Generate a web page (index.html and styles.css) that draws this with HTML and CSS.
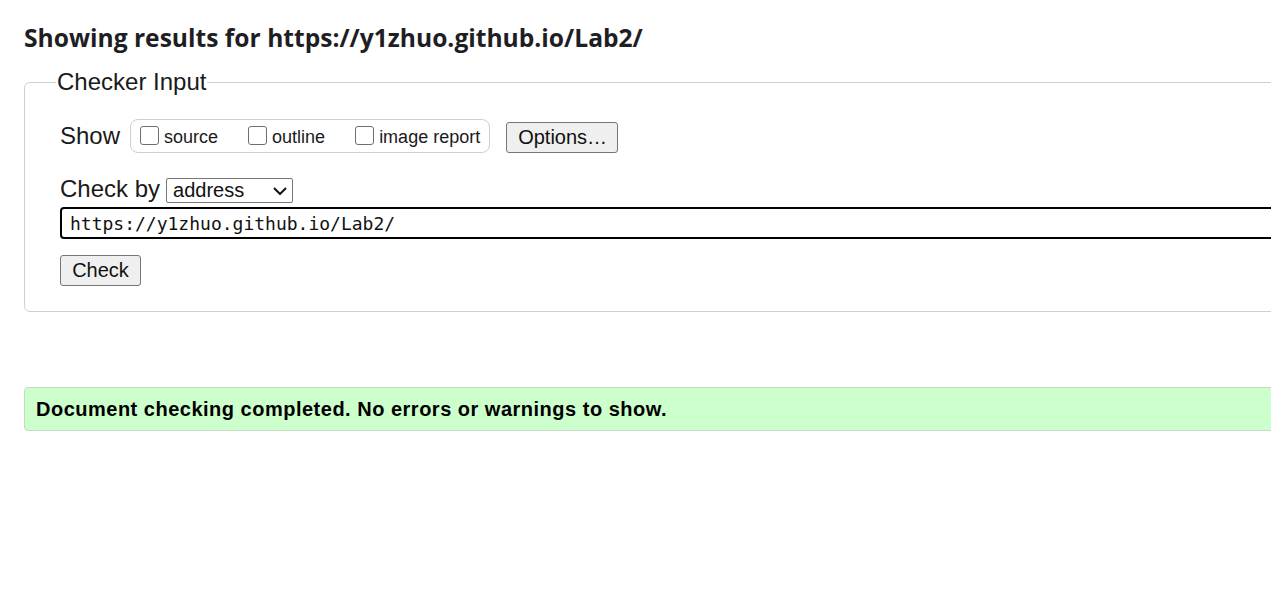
FILE: index.html
```html
<!DOCTYPE html>
<html lang="en">
<head>
<meta charset="utf-8">
<title>Nu Html Checker</title>
<link rel="stylesheet" href="styles.css">
</head>
<body>
<div class="page">
  <p class="intro">This tool is an ongoing experiment in better HTML checking, and its behavior remains subject to change</p>
  <h2 class="results-title">Showing results for https://y1zhuo.github.io/Lab2/</h2>
  <form class="checker-form">
    <fieldset class="checker">
      <legend class="checker-legend">Checker Input</legend>
      <div class="show-row">
        <span class="row-label">Show</span>
        <div class="show-group">
          <label class="opt"><span class="box"></span>source</label>
          <label class="opt"><span class="box"></span>outline</label>
          <label class="opt opt-last"><span class="box"></span>image report</label>
        </div>
        <button type="button" class="btn btn-options">Options…</button>
      </div>
      <div class="by-row">
        <span class="row-label">Check by</span>
        <div class="select">
          <span>address</span>
          <svg class="chev" width="14" height="8" viewBox="0 0 14 8"><path d="M1 1 L7 7 L13 1" fill="none" stroke="#111" stroke-width="2"/></svg>
        </div>
      </div>
      <div class="url-input">https://y1zhuo.github.io/Lab2/</div>
      <button type="button" class="btn btn-check">Check</button>
    </fieldset>
  </form>
  <div class="success">Document checking completed. No errors or warnings to show.</div>
</div>
</body>
</html>
```
FILE: styles.css
```css
html, body {
  margin: 0;
  padding: 0;
  overflow: hidden;
  background: #fff;
}

body {
  font-family: "Liberation Sans", Arial, sans-serif;
  color: #111;
}

.page {
  width: 1340px;
  padding: 0 0 0 24px;
}

.intro {
  margin: -24px 0 0 0;
  font-family: "Open Sans", "Noto Sans", sans-serif;
  font-size: 18px;
  line-height: 24px;
  color: #555;
  white-space: nowrap;
}

.results-title {
  margin: 22px 0 0 0;
  font-family: "Open Sans", "Noto Sans", sans-serif;
  font-weight: 700;
  font-size: 24.6px;
  line-height: 32px;
  color: #1e1e24;
}

.checker-form {
  margin: 0;
}

.checker {
  margin: 14px 0 0 0;
  padding: 0 0 25px 35px;
  border: 1px solid #cfcfcf;
  border-radius: 6px;
}

.checker-legend {
  margin-left: -4px;
  padding: 0 1px;
  font-size: 24px;
  color: #1a1a1a;
}

.row-label {
  font-size: 24px;
  color: #1a1a1a;
}

.show-row {
  display: flex;
  align-items: center;
  margin-top: 23px;
}

.show-group {
  display: flex;
  align-items: center;
  height: 32px;
  margin-left: 10px;
  padding: 0 9px;
  border: 1px solid #cfcfcf;
  border-radius: 8px;
  font-size: 18px;
  color: #1a1a1a;
}

.opt {
  display: flex;
  align-items: center;
  margin-right: 30px;
  padding-top: 2px;
}

.opt-last {
  margin-right: 0;
}

.box {
  box-sizing: border-box;
  width: 19px;
  height: 19px;
  margin-right: 5px;
  margin-top: -4px;
  border: 1px solid #6f6f6f;
  border-radius: 3px;
  background: #fff;
}

.btn {
  box-sizing: border-box;
  font-family: "Liberation Sans", Arial, sans-serif;
  font-size: 20px;
  color: #111;
  background: #efefef;
  border: 1px solid #767676;
  border-radius: 3px;
  padding: 0 11px;
  height: 31px;
}

.btn-options {
  margin-left: 16px;
  margin-top: 3px;
  width: 112px;
}

.by-row {
  display: flex;
  align-items: baseline;
  margin-top: 22px;
}

.select {
  box-sizing: border-box;
  display: flex;
  align-items: center;
  justify-content: space-between;
  width: 127px;
  height: 25px;
  margin-left: 6px;
  padding: 0 5px 0 6px;
  border: 1px solid #767676;
  border-radius: 2px;
  font-size: 20px;
  color: #111;
}

.chev {
  margin-right: 0;
}

.url-input {
  box-sizing: border-box;
  height: 32px;
  margin-top: 4px;
  padding: 0 8px;
  border: 2px solid #000;
  border-radius: 4px;
  font-family: "DejaVu Sans Mono", "Liberation Mono", monospace;
  font-size: 18px;
  line-height: 30px;
  color: #111;
}

.btn-check {
  display: block;
  margin-top: 16px;
  width: 81px;
}

.success {
  box-sizing: border-box;
  margin-top: 75px;
  height: 44px;
  padding: 0 11px;
  display: flex;
  align-items: center;
  background: #ccffcc;
  border: 1px solid #c4dcc4;
  border-radius: 4px;
  font-weight: 700;
  font-size: 20px;
  letter-spacing: 0.5px;
  color: #000;
}
```
